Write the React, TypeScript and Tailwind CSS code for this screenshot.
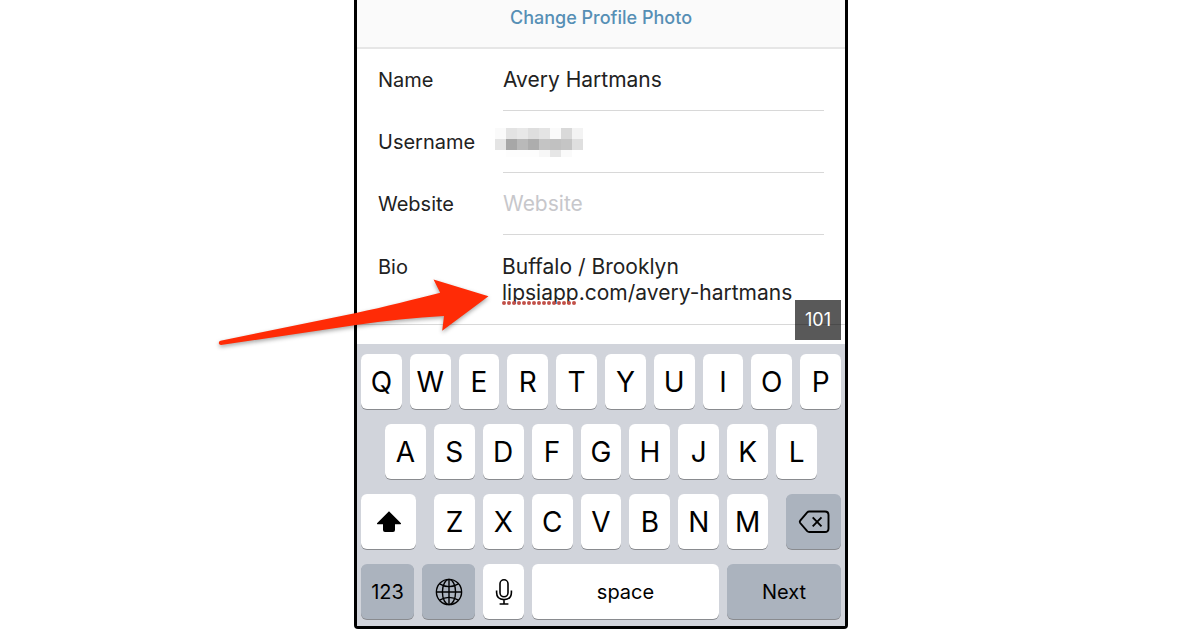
import React, { useState } from 'react'

const SANS = { fontFamily: 'Inter, "Liberation Sans", sans-serif' }

const TOP_ROW = ['Q', 'W', 'E', 'R', 'T', 'Y', 'U', 'I', 'O', 'P']
const HOME_ROW = ['A', 'S', 'D', 'F', 'G', 'H', 'J', 'K', 'L']
const BOTTOM_ROW = ['Z', 'X', 'C', 'V', 'B', 'N', 'M']

// grey level of each block in the hidden username
const MOSAIC = [
  ['#fafafa', '#e3e3e3', '#e8e8e8', '#dedede', '#e4e4e4', '#fafafa', '#d9d9d9', '#f3f3f3'],
  ['#e4e4e4', '#a7a7a7', '#b9b9b9', '#adadad', '#c4c4c4', '#c1c1c1', '#c5c5c5', '#dfdfdf'],
  ['#ffffff', '#fdfdfd', '#fdfdfd', '#fdfdfd', '#f7f7f7', '#e6e6e6', '#fafafa', '#ffffff'],
]

const Mosaic = () => (
  <svg width="88" height="29" viewBox="0 0 88 29" shapeRendering="crispEdges" aria-hidden="true">
    {MOSAIC.map((row, y) =>
      row.map((fill, x) => (
        <rect key={`${x}-${y}`} x={x * 11} y={y * 11} width="11" height={y === 2 ? 7 : 11} fill={fill} />
      ))
    )}
  </svg>
)

const ShiftIcon = () => (
  <svg width="26" height="22" viewBox="0 0 26 22" fill="black" aria-hidden="true">
    <path d="M13 0.3 L25 12.2 Q25.3 13.2 24.4 13.3 H19 V19 Q19 21 17 21 H9 Q7 21 7 19 V13.3 H1.6 Q0.7 13.2 1 12.2 Z" />
  </svg>
)

const DeleteIcon = () => (
  <svg width="32" height="24" viewBox="0 0 32 24" fill="none" stroke="black" aria-hidden="true">
    <path d="M11.2 1.5 H27 Q30.5 1.5 30.5 5 V18.5 Q30.5 22 27 22 H11.2 Q10 22 9.2 21.2 L2.2 13 Q1.3 11.8 2.2 10.6 L9.2 2.3 Q10 1.5 11.2 1.5 Z" strokeWidth="1.9" />
    <path d="M14.7 7.3 L23.5 16.3 M23.5 7.3 L14.7 16.3" strokeWidth="1.9" />
  </svg>
)

const GlobeIcon = () => (
  <svg width="28" height="28" viewBox="0 0 28 28" fill="none" stroke="black" strokeWidth="1.4" aria-hidden="true">
    <circle cx="14" cy="14" r="12.6" />
    <ellipse cx="14" cy="14" rx="6.6" ry="12.6" />
    <path d="M14 1.4 V26.6 M1.4 14 H26.6" />
    <path d="M4.6 5.8 Q14 11.4 23.4 5.8 M4.6 22.2 Q14 16.6 23.4 22.2" />
  </svg>
)

const MicIcon = () => (
  <svg width="18" height="28" viewBox="0 0 18 28" fill="none" stroke="black" strokeWidth="1.6" aria-hidden="true">
    <rect x="5" y="1.8" width="8" height="17" rx="4" />
    <path d="M1.6 12.5 V14.6 Q1.6 21.6 9 21.6 Q16.4 21.6 16.4 14.6 V12.5 M9 21.6 V26 M4.6 26 H13.4" />
  </svg>
)

interface KeyProps {
  className: string
  dark?: boolean
  label?: string
  children: React.ReactNode
}

function Key({ className, dark, label, children }: KeyProps) {
  return (
    <button
      type="button"
      aria-label={label}
      className={`flex h-[55px] items-center justify-center rounded-md text-black shadow-[0_1px_0_#898b8f] ${
        dark ? 'bg-[#abb3be]' : 'bg-white'
      } ${className}`}
    >
      {children}
    </button>
  )
}

const LetterKeys = ({ letters }: { letters: string[] }) => (
  <>
    {letters.map((letter) => (
      <Key key={letter} className="min-w-0 flex-1 text-[28px]">{letter}</Key>
    ))}
  </>
)

interface FieldProps {
  id: string
  label: string
  children: React.ReactNode
}

const Field = ({ id, label, children }: FieldProps) => (
  <div className="flex h-[62px] px-[21px]">
    <label htmlFor={id} className="flex w-[125px] shrink-0 items-center text-xl text-[#222]">{label}</label>
    <div className="relative flex min-w-0 flex-1 items-center border-b border-[#d8d8d8]">{children}</div>
  </div>
)

export default function App() {
  const [name, setName] = useState('Avery Hartmans')
  const [username, setUsername] = useState('')
  const [website, setWebsite] = useState('')
  const [bio, setBio] = useState('Buffalo / Brooklyn\nlipsiapp.com/avery-hartmans')

  return (
    <div className="overflow-hidden bg-white pb-0.5 pl-0.5" style={SANS}>
      <main className="relative mx-auto w-full max-w-[494px] rounded-b border-x-3 border-b-3 border-black bg-white">

        {/* Header */}
        <header className="flex justify-center border-b-2 border-[#e6e6e6] bg-[#fafafa] pt-1 pb-[15px]">
          <button type="button" className="text-lg font-medium text-[#568fb5]">Change Profile Photo</button>
        </header>

        {/* Profile form */}
        <form>
          <Field id="name" label="Name">
            <input
              id="name"
              value={name}
              onChange={(e) => setName(e.target.value)}
              className="w-full bg-transparent text-[21px] text-[#222] outline-none"
            />
          </Field>
          <Field id="username" label="Username">
            <input
              id="username"
              value={username}
              onChange={(e) => setUsername(e.target.value)}
              className="w-full bg-transparent text-[21px] text-[#222] outline-none"
            />
            <div className="pointer-events-none absolute top-[17px] -left-2"><Mosaic /></div>
          </Field>
          <Field id="website" label="Website">
            <input
              id="website"
              value={website}
              placeholder="Website"
              onChange={(e) => setWebsite(e.target.value)}
              className="w-full bg-transparent text-[21px] text-[#222] outline-none placeholder:text-[#c7c7cb]"
            />
          </Field>
          <div className="relative flex border-b border-[#d8d8d8] px-[21px] pt-[19px] pb-[18px]">
            <label htmlFor="bio" className="w-[124px] shrink-0 text-xl leading-[26px] text-[#222]">Bio</label>
            <div className="relative min-w-0 flex-1">
              <textarea
                id="bio"
                rows={2}
                value={bio}
                spellCheck={false}
                onChange={(e) => setBio(e.target.value)}
                className="block w-full resize-none overflow-hidden bg-transparent text-[21px] leading-[26px] text-[#222] outline-none"
              />
              <svg className="pointer-events-none absolute top-[47px] left-0" width="78" height="4" aria-hidden="true">
                <line x1="2" y1="2" x2="77" y2="2" stroke="#c25048" strokeWidth="4" strokeLinecap="round" strokeDasharray="0 5" />
              </svg>
            </div>
            <output htmlFor="bio" className="absolute right-1 -bottom-4 bg-black/65 px-2.5 py-1.5 text-lg leading-7 text-white">
              101
            </output>
          </div>
        </form>

        {/* Keyboard */}
        <section aria-label="Keyboard" className="mt-[19px] flex flex-col gap-[15px] bg-[#d1d4db] px-1 pt-2.5 pb-[7px]">
          <div className="flex gap-2">
            <LetterKeys letters={TOP_ROW} />
          </div>
          <div className="flex gap-2 px-6">
            <LetterKeys letters={HOME_ROW} />
          </div>
          <div className="flex gap-[18px]">
            <Key className="w-[55px]" label="Shift"><ShiftIcon /></Key>
            <div className="flex min-w-0 flex-1 gap-2">
              <LetterKeys letters={BOTTOM_ROW} />
            </div>
            <Key className="w-[55px]" label="Delete" dark><DeleteIcon /></Key>
          </div>
          <div className="flex gap-2">
            <Key className="w-[53px] text-xl" dark>123</Key>
            <Key className="w-[53px]" label="Next keyboard" dark><GlobeIcon /></Key>
            <Key className="w-[41px]" label="Dictate"><MicIcon /></Key>
            <Key className="min-w-0 flex-1 text-xl">space</Key>
            <Key className="w-[114px] text-xl" dark>Next</Key>
          </div>
        </section>

        {/* Arrow pointing at the link in the bio */}
        <svg
          className="pointer-events-none absolute top-[270px] -left-[147px] drop-shadow-[0_2px_2px_rgba(0,0,0,0.35)]"
          width="290"
          height="85"
          viewBox="0 0 290 85"
          aria-hidden="true"
        >
          <path
            d="M278.5 26.3 L223.5 9.5 L230.2 22.8 C205 29 175 37 146 43 L10.5 70.8 Q8.6 71.5 8.8 73.2 Q9.2 75 11 75 L146 55 C175 50.5 205 47.5 234 46 L232.2 60.8 Z"
            fill="#ff2b06"
          />
        </svg>
      </main>
    </div>
  )
}
